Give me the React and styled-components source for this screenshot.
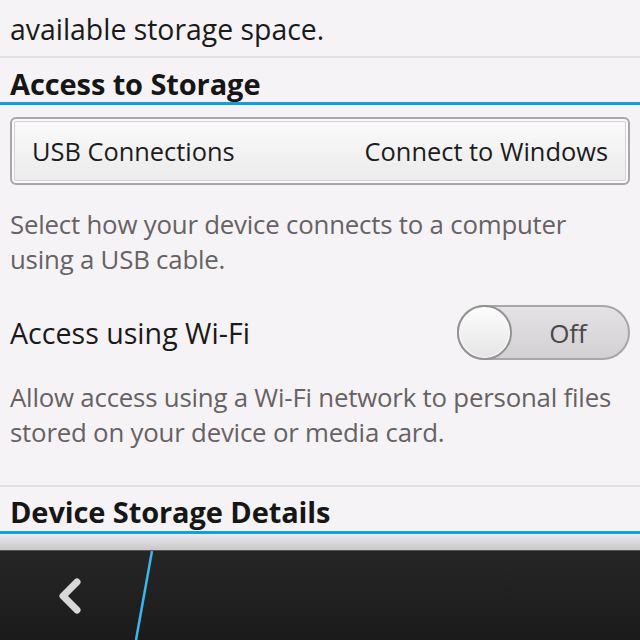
import styled, { createGlobalStyle } from 'styled-components';

const GlobalStyle = createGlobalStyle`
  *, *::before, *::after {
    box-sizing: border-box;
  }
  html, body {
    margin: 0;
    padding: 0;
    background: #f6f3f6;
  }
  body {
    font-family: "Open Sans", "Liberation Sans", sans-serif;
    color: #1a1a1a;
  }
`;

const Screen = styled.div`
  width: 640px;
  height: 640px;
  display: flex;
  flex-direction: column;
  overflow: hidden;
  background: #f6f3f6;
`;

const Content = styled.div`
  flex: 1;
  display: flex;
  flex-direction: column;
`;

const Lead = styled.p`
  margin: 0;
  height: 56px;
  padding: 11px 10px 0;
  font-size: 28.4px;
  line-height: 36px;
  color: #1a1a1a;
`;

const Note = styled.p`
  margin: 0;
  padding: ${(p) => p.$pad};
  font-size: 25.8px;
  line-height: 35px;
  letter-spacing: -0.2px;
  color: #666264;
`;

const Divider = styled.div`
  height: 2px;
  background: #e4e0e3;
`;

const Header = styled.h2`
  margin: 0;
  height: 47px;
  padding: ${(p) => p.$top || 8}px 10px 0;
  font-size: 29px;
  font-weight: 700;
  line-height: 36px;
  letter-spacing: -0.1px;
  color: #161616;
  border-bottom: 3px solid #0ea2dd;
`;

const ButtonWrap = styled.div`
  padding: 12px 10px 0;
`;

const DropButton = styled.div`
  height: 68px;
  display: flex;
  align-items: center;
  justify-content: space-between;
  padding: 0 20px;
  border: 2px solid #a9a7a9;
  border-radius: 6px;
  box-shadow: inset 0 0 0 2px #fafafa, inset 0 0 0 3px #d4d2d4;
  background: linear-gradient(#fbfbfb, #ebeaeb);
  font-size: 25.4px;
  color: #1c1c1c;
`;

const Row = styled.div`
  display: flex;
  align-items: center;
  justify-content: space-between;
  padding: 28px 10px 20px;
  font-size: 28.6px;
  color: #1a1a1a;
`;

const Toggle = styled.div`
  width: 173px;
  height: 55px;
  border: 2px solid #a8a6a8;
  border-radius: 28px;
  background: linear-gradient(#e4e2e4, #d2d0d2);
  display: flex;
  align-items: center;
`;

const Knob = styled.div`
  width: 55px;
  height: 55px;
  margin-left: -2px;
  border-radius: 50%;
  border: 2px solid #949294;
  background: linear-gradient(#fdfdfd, #e6e5e6);
  box-shadow: inset 0 0 0 1px #fff;
`;

const ToggleLabel = styled.span`
  flex: 1;
  text-align: center;
  font-size: 26px;
  color: #4a484a;
  padding-right: 4px;
`;

const Shade = styled.div`
  height: 16px;
  background: linear-gradient(#ebe9eb, #c9c7c9);
`;

const ActionBar = styled.div`
  height: 90px;
  background: linear-gradient(#262626, #1b1b1b);
  border-top: 1px solid #555;
  display: flex;
  align-items: stretch;
`;

const BackButton = styled.div`
  width: 150px;
  display: flex;
  align-items: center;
  padding-left: 55px;
`;

const Slash = styled.svg`
  width: 20px;
  height: 89px;
  margin-left: -16px;
`;

export default function App() {
  return (
    <Screen>
      <GlobalStyle />
      <Content>
        <Lead>available storage space.</Lead>
        <Divider />
        <Header>Access to Storage</Header>
        <ButtonWrap>
          <DropButton>
            <span>USB Connections</span>
            <span>Connect to Windows</span>
          </DropButton>
        </ButtonWrap>
        <Note $pad="22px 10px 0">
          Select how your device connects to a computer using a USB cable.
        </Note>
        <Row>
          <span>Access using Wi-Fi</span>
          <Toggle>
            <Knob />
            <ToggleLabel>Off</ToggleLabel>
          </Toggle>
        </Row>
        <Note $pad="0 10px 35px">
          Allow access using a Wi-Fi network to personal files stored on your device or media card.
        </Note>
        <Divider />
        <Header $top={7}>Device Storage Details</Header>
      </Content>
      <Shade />
      <ActionBar>
        <BackButton>
          <svg width="28" height="36" viewBox="0 0 28 36">
            <path d="M22 4 L8 18 L22 32" fill="none" stroke="#d8d8d8" strokeWidth="7" strokeLinecap="round" strokeLinejoin="round" />
          </svg>
        </BackButton>
        <Slash viewBox="0 0 20 89" preserveAspectRatio="none">
          <line x1="18" y1="0" x2="2" y2="89" stroke="#39b8ec" strokeWidth="2.5" />
        </Slash>
      </ActionBar>
    </Screen>
  );
}
